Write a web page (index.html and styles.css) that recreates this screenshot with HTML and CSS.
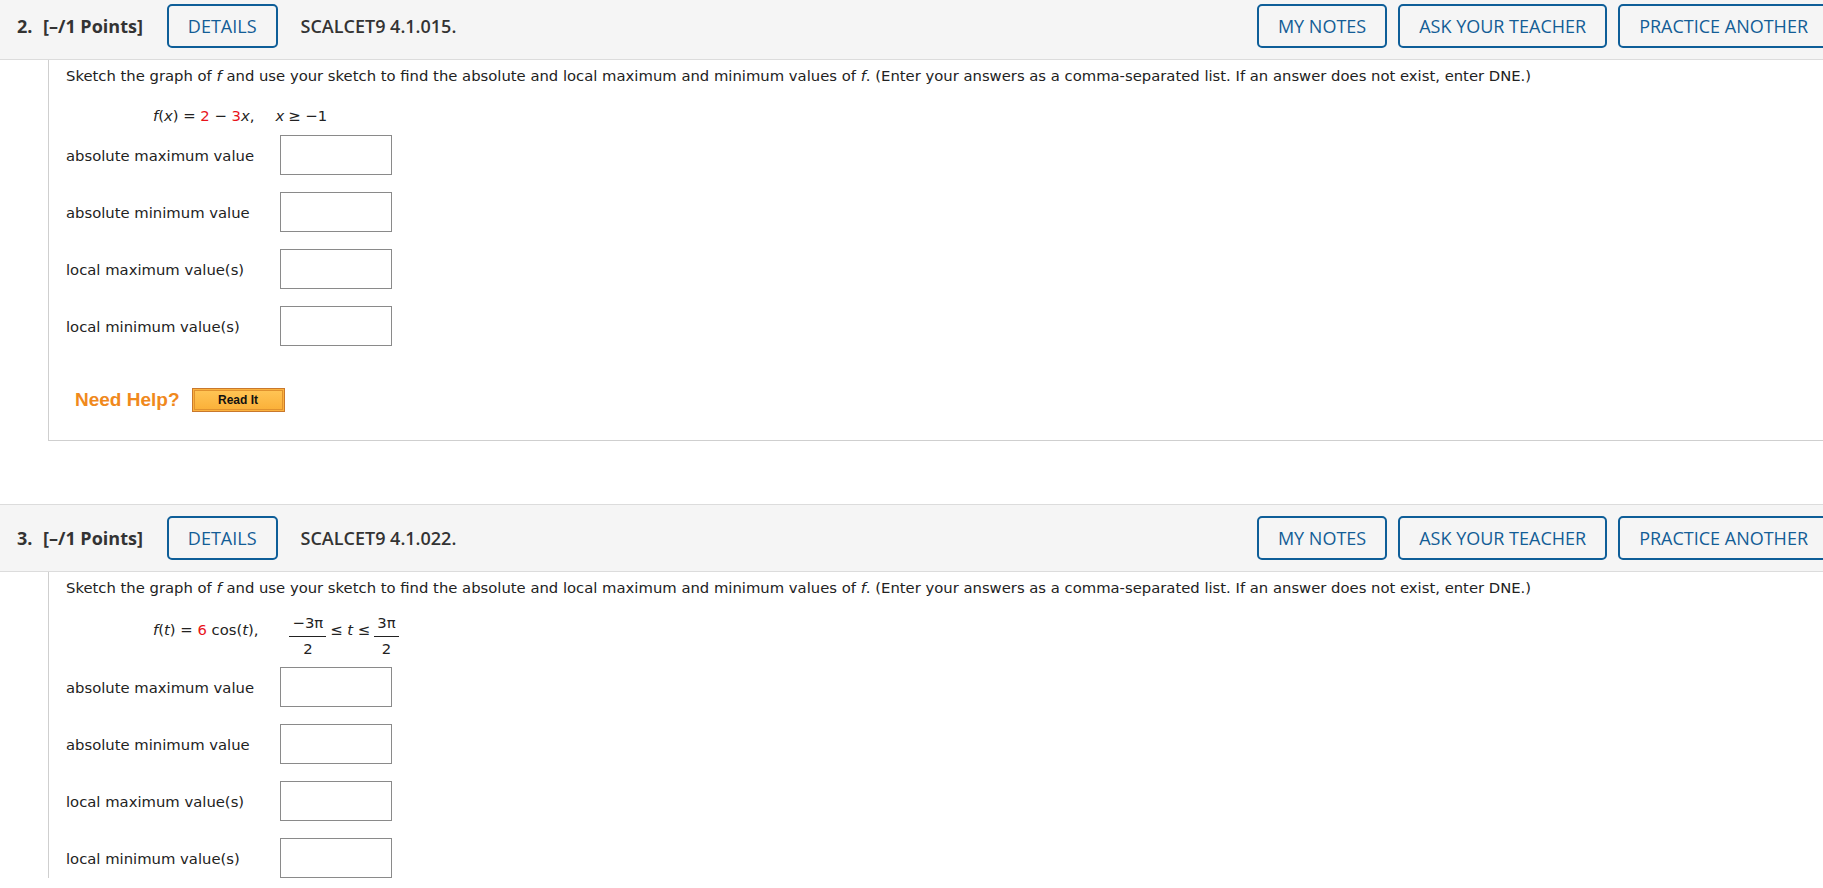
FILE: index.html
```html
<!DOCTYPE html>
<html>
<head>
<meta charset="utf-8">
<link rel="stylesheet" href="styles.css">
</head>
<body>
<div class="page">
  <section class="question first">
    <header class="qhead">
      <span class="qnum">2.</span>
      <span class="points">[–/1 Points]</span>
      <button class="btn">DETAILS</button>
      <span class="qid">SCALCET9 4.1.015.</span>
      <span class="spacer"></span>
      <button class="btn">MY NOTES</button>
      <button class="btn">ASK YOUR TEACHER</button>
      <button class="btn">PRACTICE ANOTHER</button>
    </header>
    <div class="qbody">
      <p class="prompt">Sketch the graph of <i>f</i> and use your sketch to find the absolute and local maximum and minimum values of <i>f</i>. (Enter your answers as a comma-separated list. If an answer does not exist, enter DNE.)</p>
      <div class="formula">
        <span><i>f</i>(<i>x</i>) = <span class="red">2</span> − <span class="red">3</span><i>x</i>,</span>
        <span class="cond"><i>x</i> ≥ −1</span>
      </div>
      <div class="answers">
        <div class="row"><span class="label">absolute maximum value</span><input class="box" type="text"></div>
        <div class="row"><span class="label">absolute minimum value</span><input class="box" type="text"></div>
        <div class="row"><span class="label">local maximum value(s)</span><input class="box" type="text"></div>
        <div class="row"><span class="label">local minimum value(s)</span><input class="box" type="text"></div>
      </div>
      <div class="help">
        <span class="need">Need Help?</span>
        <button class="readit"><span>Read It</span></button>
      </div>
    </div>
  </section>

  <section class="question second">
    <header class="qhead">
      <span class="qnum">3.</span>
      <span class="points">[–/1 Points]</span>
      <button class="btn">DETAILS</button>
      <span class="qid">SCALCET9 4.1.022.</span>
      <span class="spacer"></span>
      <button class="btn">MY NOTES</button>
      <button class="btn">ASK YOUR TEACHER</button>
      <button class="btn">PRACTICE ANOTHER</button>
    </header>
    <div class="qbody open">
      <p class="prompt">Sketch the graph of <i>f</i> and use your sketch to find the absolute and local maximum and minimum values of <i>f</i>. (Enter your answers as a comma-separated list. If an answer does not exist, enter DNE.)</p>
      <div class="formula tall">
        <span class="plain"><i>f</i>(<i>t</i>) = <span class="red">6</span> cos(<i>t</i>),</span>
        <span class="cond">
          <span class="frac"><span class="num">−3π</span><span class="den">2</span></span>
          <span class="plain rel">≤ <i>t</i> ≤</span>
          <span class="frac"><span class="num">3π</span><span class="den">2</span></span>
        </span>
      </div>
      <div class="answers tight">
        <div class="row"><span class="label">absolute maximum value</span><input class="box" type="text"></div>
        <div class="row"><span class="label">absolute minimum value</span><input class="box" type="text"></div>
        <div class="row"><span class="label">local maximum value(s)</span><input class="box" type="text"></div>
        <div class="row"><span class="label">local minimum value(s)</span><input class="box" type="text"></div>
      </div>
    </div>
  </section>
</div>
</body>
</html>
```

FILE: styles.css
```css
html, body {
  margin: 0;
  padding: 0;
  background: #fff;
  overflow: hidden;
}

.page {
  width: 1839px;
  font-family: "DejaVu Sans", Verdana, sans-serif;
  font-size: 14.8px;
  color: #222;
}

.question.first {
  margin-top: -8px;
}

.question.second {
  margin-top: 63px;
}

.qhead {
  display: flex;
  align-items: center;
  background: #f5f5f5;
  border-top: 1px solid #dcdcdc;
  border-bottom: 1px solid #dcdcdc;
  padding: 11px 10px 11px 17px;
  font-family: "Open Sans", sans-serif;
  color: #333;
}

.qnum {
  font-weight: 700;
  font-size: 18px;
  width: 26px;
}

.points {
  font-weight: 700;
  font-size: 18px;
  margin-right: 24px;
}

.qid {
  font-weight: 600;
  font-size: 18px;
  margin-left: 23px;
}

.spacer {
  flex: 1;
}

.btn {
  font-family: "Open Sans", sans-serif;
  font-size: 18px;
  font-weight: 400;
  color: #135d96;
  background: transparent;
  border: 2px solid #0e5e98;
  border-radius: 5px;
  height: 44px;
  padding: 0 19px;
  margin-left: 11px;
  box-sizing: border-box;
}

.qhead .btn:first-of-type {
  margin-left: 0;
}

.qbody {
  margin-left: 48px;
  border-left: 1px solid #cfcfcf;
  border-bottom: 1px solid #cfcfcf;
  padding: 0 0 0 17px;
  height: 381px;
  box-sizing: border-box;
}

.qbody.open {
  border-bottom: none;
  height: auto;
}

.prompt {
  margin: 0;
  padding-top: 7px;
  line-height: 18px;
}

.formula {
  margin: 22px 0 0 87px;
  display: flex;
  align-items: center;
  gap: 21px;
  line-height: 18px;
}

.formula.tall {
  margin-top: 17px;
  align-items: flex-start;
  gap: 31px;
}

.formula.tall .plain {
  margin-top: 7px;
}

.red {
  color: #e8141b;
}

.cond {
  display: inline-flex;
  align-items: center;
  gap: 4px;
}

.formula.tall .cond {
  align-items: flex-start;
}

.frac {
  display: inline-flex;
  flex-direction: column;
  align-items: center;
  line-height: 18px;
}

.frac .num {
  border-bottom: 1px solid #222;
  padding: 0 3px 4px;
}

.frac .den {
  padding-top: 3px;
}

.answers {
  margin-top: 10px;
  display: flex;
  flex-direction: column;
  gap: 17px;
}

.answers.tight {
  margin-top: 9px;
}

.row {
  display: flex;
  align-items: center;
}

.label {
  width: 214px;
}

.box {
  width: 112px;
  height: 40px;
  border: 1px solid #8a8a8a;
  box-sizing: border-box;
  margin: 0;
  padding: 0;
  background: #fff;
}

.help {
  display: flex;
  align-items: center;
  height: 24px;
  margin-top: 42px;
  padding-left: 9px;
  gap: 12px;
}

.need {
  font-family: "Liberation Sans", Arial, sans-serif;
  font-weight: 700;
  font-size: 19px;
  color: #f0891c;
}

.readit {
  width: 93px;
  height: 24px;
  padding: 1px;
  margin: 0;
  background: #fbb23f;
  border: 1px solid #c9782c;
  box-sizing: border-box;
  display: flex;
}

.readit span {
  flex: 1;
  border: 1px solid #e0912e;
  background: linear-gradient(#ffc454, #fbb13a);
  font-family: "Liberation Sans", Arial, sans-serif;
  font-weight: 700;
  font-size: 12px;
  color: #111;
  line-height: 18px;
  text-align: center;
}
```
